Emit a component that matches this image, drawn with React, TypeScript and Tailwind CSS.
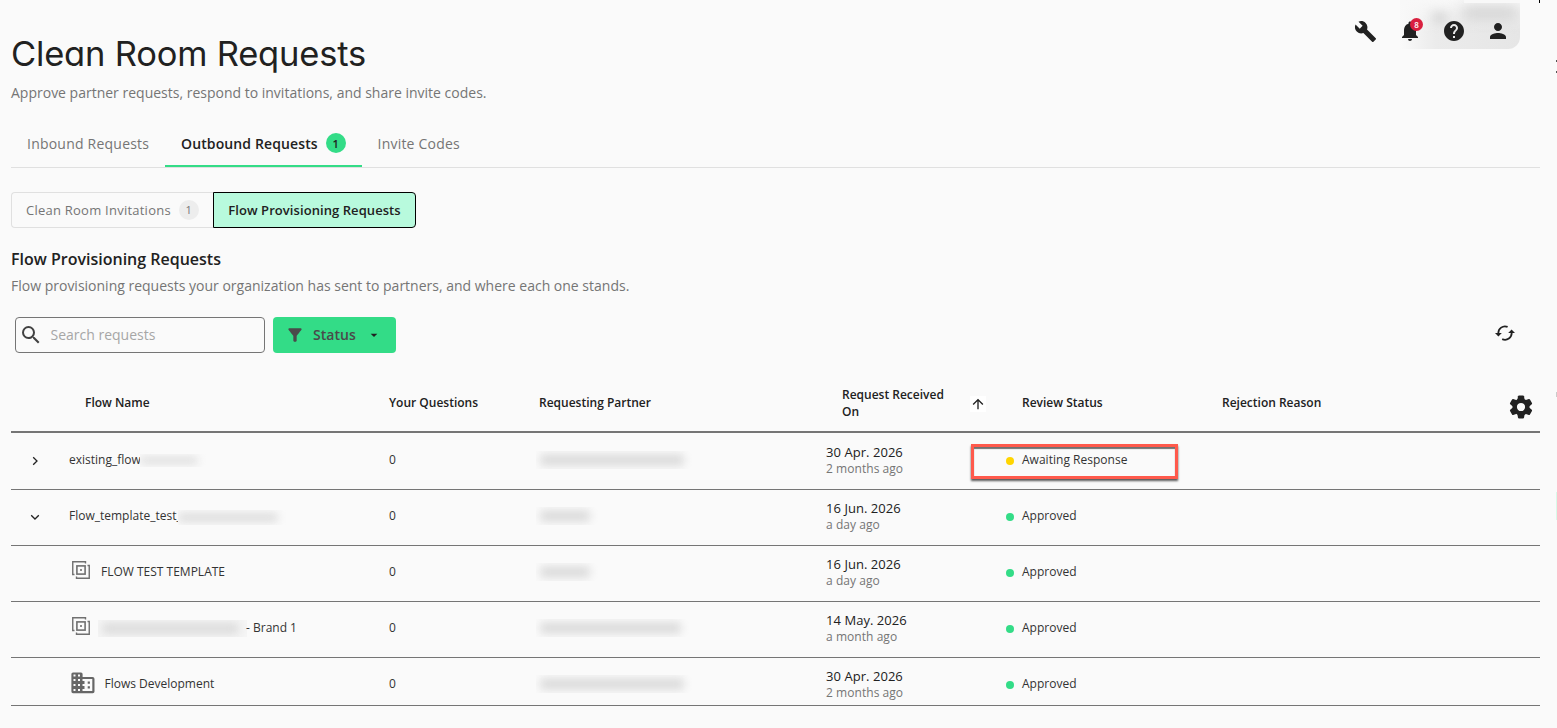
import React from "react";
import {
  MdBuild,
  MdNotifications,
  MdHelp,
  MdPerson,
  MdSearch,
  MdFilterAlt,
  MdArrowDropDown,
  MdArrowUpward,
} from "react-icons/md";

const COLS = "grid grid-cols-[58px_320px_150px_287px_196px_200px_1fr]";

function SyncIcon() {
  return (
    <svg width="20" height="16" viewBox="0 0 20 16" fill="none">
      <path d="M3.4 8.6A6.6 6.6 0 0 1 12.6 1.9" stroke="#212121" strokeWidth="1.8" />
      <path d="M16.6 7.4A6.6 6.6 0 0 1 7.2 14.1" stroke="#212121" strokeWidth="1.8" />
      <path d="M0 8h6.8L3.4 11.4z" fill="#212121" />
      <path d="M13.2 8H20L16.6 4.6z" fill="#212121" />
    </svg>
  );
}

function GearIcon() {
  return (
    <svg width="24" height="24" viewBox="-12 -12 24 24" fill="#212121">
      <circle r="6.3" fill="none" stroke="#212121" strokeWidth="4.4" />
      {[0, 60, 120, 180, 240, 300].map((angle) => (
        <path
          key={angle}
          transform={`rotate(${angle})`}
          d="M-3.700 -7L-3 -10.700Q-2.800 -11.500 -2 -11.500H2Q2.800 -11.500 3 -10.700L3.700 -7z"
        />
      ))}
    </svg>
  );
}

function TemplateIcon() {
  return (
    <svg width="18" height="18" viewBox="0 0 18 18" fill="none" stroke="#707070">
      <path d="M13.5 2.5V.75H.75V13.5H2.5" strokeWidth="1.4" />
      <path d="M4.5 15.5v1.75h12.75V4.5H15.5" strokeWidth="1.4" />
      <rect x="4.9" y="4.9" width="8.2" height="8.2" strokeWidth="1.6" />
      <rect x="8" y="8" width="2" height="2" fill="#8a8a8a" stroke="none" />
    </svg>
  );
}

function BuildingIcon() {
  return (
    <svg width="24" height="22" viewBox="0 0 24 22">
      <path
        fill="#666"
        fillRule="evenodd"
        d="M2 .5h8a1.6 1.6 0 0 1 1.6 1.6V5H21.5a2 2 0 0 1 2 2v12.5a1.7 1.7 0 0 1-1.7 1.7H2A1.6 1.6 0 0 1 .4 19.6V2.1A1.6 1.6 0 0 1 2 .5zM2.5 2.5v2h2v-2zM7 2.5v2h2v-2zM2.5 7v2h2V7zM7 7v2h2V7zM2.5 12v2h2v-2zM7 12v2h2v-2zM2.5 17v2h2v-2zM7 17v2h2v-2zM11.5 7v2h2v3h-2v2h2v3h-2v2h9.8V7z"
      />
      <path fill="#666" d="M16.7 9.5h2.2v2.200h-2.200zM16.7 14.2h2.2v2.2h-2.2z" />
    </svg>
  );
}

function Chevron({ open }: { open: boolean }) {
  return (
    <svg width="10" height="10" viewBox="0 0 10 10" fill="none" stroke="#212121" strokeWidth="1.3">
      {open ? <path d="M1.2 3.2L5 7l3.8-3.8" /> : <path d="M3.2 1.2L7 5 3.2 8.8" />}
    </svg>
  );
}

function Redacted({ className, inset = "pl-1" }: { className: string; inset?: string }) {
  return (
    <span className={`block overflow-hidden ${className}`}>
      <span className={`block h-full py-[3px] pr-2 ${inset}`}>
        <span className="block h-full rounded bg-[#dcdcdc] blur-[4px]" />
      </span>
    </span>
  );
}

type Row = {
  lead: React.ReactNode;
  name: React.ReactNode;
  partner: string;
  date: string;
  ago: string;
  status: string;
  height: string;
};

const rows: Row[] = [
  {
    lead: <Chevron open={false} />,
    name: (
      <>
        <span>existing_flow</span>
        <Redacted inset="pl-0" className="relative -ml-px mt-px h-[13px] w-[66px] bg-[#fafafa]" />
      </>
    ),
    partner: "w-[156px]",
    date: "30 Apr. 2026",
    ago: "2 months ago",
    status: "Awaiting Response",
    height: "h-[57px] pt-px",
  },
  {
    lead: <Chevron open />,
    name: (
      <>
        <span>Flow_template_test_</span>
        <Redacted inset="pl-0" className="relative -ml-[4px] mt-0.5 h-[15px] w-[108px] bg-[#fafafa]" />
      </>
    ),
    partner: "w-[62px]",
    date: "16 Jun. 2026",
    ago: "a day ago",
    status: "Approved",
    height: "h-[56px]",
  },
  {
    lead: null,
    name: (
      <>
        <span className="ml-[3px] mr-[11px] pb-[5px]">
          <TemplateIcon />
        </span>
        <span>FLOW TEST TEMPLATE</span>
      </>
    ),
    partner: "w-[62px]",
    date: "16 Jun. 2026",
    ago: "a day ago",
    status: "Approved",
    height: "h-[56px]",
  },
  {
    lead: null,
    name: (
      <>
        <span className="ml-[3px] mr-2 pb-[5px]">
          <TemplateIcon />
        </span>
        <Redacted className="h-[17px] w-[149px] bg-[#f5f5f5]" />
        <span className="-ml-px">- Brand 1</span>
      </>
    ),
    partner: "w-[153px]",
    date: "14 May. 2026",
    ago: "a month ago",
    status: "Approved",
    height: "h-[56px]",
  },
  {
    lead: null,
    name: (
      <>
        <span className="ml-[2px] mr-[10px] pb-0.5">
          <BuildingIcon />
        </span>
        <span className="-ml-[0.5px]">Flows Development</span>
      </>
    ),
    partner: "w-[156px]",
    date: "30 Apr. 2026",
    ago: "2 months ago",
    status: "Approved",
    height: "h-[48px]",
  },
];

function TableRow({ row }: { row: Row }) {
  const waiting = row.status === "Awaiting Response";
  return (
    <div className={`${COLS} ${row.height} items-start border-b border-[#757575] text-xs text-[#333]`}>
      <div className="flex h-[54px] items-center pl-[19px]">{row.lead}</div>
      <div className="flex h-[52px] items-center whitespace-nowrap [&_svg]:block">{row.name}</div>
      <div className="flex h-[52px] items-center">0</div>
      <div className="flex h-[52px] items-center">
        <Redacted className={`-ml-[3px] h-[18px] ${row.partner}`} />
      </div>
      <div className="pt-[9px]">
        <div className="text-[13px] leading-[18px] tracking-[0.05px] text-[#212121]">{row.date}</div>
        <div className="leading-[15px] tracking-[0.05px] text-[#757575]">{row.ago}</div>
      </div>
      <div className="relative -ml-4 flex h-[52px] items-center gap-2">
        <span className={`mt-px size-2 rounded-full ${waiting ? "bg-[#ffd500]" : "bg-[#33dc87]"}`} />
        <span className="whitespace-nowrap tracking-[0.02px]">{row.status}</span>
        {waiting && (
          <span className="absolute -left-[35px] top-[10px] h-[35px] w-[207px] border-[3px] border-[#ff5a4c] shadow-[0_2px_2px_rgba(0,0,0,0.65),inset_0_2px_1px_rgba(0,0,0,0.55)]" />
        )}
      </div>
      <div />
    </div>
  );
}

export default function App() {
  return (
    <div className="relative h-[728px] w-[1557px] overflow-hidden bg-[#fafafa] pl-[11px] pr-[17px] font-['Open_Sans',sans-serif] text-[#212121]">
      <header className="flex h-[126px] justify-between">
        <div className="pt-[30px]">
          <h1 className="font-['Inter',sans-serif] text-[34.5px] leading-[48px] tracking-[-0.2px] [font-feature-settings:'cv11']">
            Clean Room Requests
          </h1>
          <p className="mt-[5px] text-sm leading-5 text-[#757575]">
            Approve partner requests, respond to invitations, and share invite codes.
          </p>
        </div>
        <div className="relative h-[49px]">
          <div className="absolute -right-[-20px] top-0 h-[49px] w-[120px] overflow-hidden rounded-br-xl bg-linear-to-r from-[#fafafa] via-[#ebebeb] via-30% to-[#e6e6e6]">
            <div className="absolute left-0 top-0 h-8 w-full bg-linear-to-b from-[#f8f8f8] to-transparent" />
            <div className="absolute left-[62px] top-[7px] h-3 w-14 bg-[#cfcfcf] blur-[7px]" />
            <div className="absolute left-8 top-3 h-3 w-4 bg-[#dadada] blur-[5px]" />
            <div className="absolute right-0 top-0 h-[3px] w-14 bg-[#f8f8f8]" />
          </div>
          <div className="relative flex h-[62px] items-center gap-5 pr-[30px]">
            <MdBuild size={23} className="mr-px" />
            <span className="relative">
              <MdNotifications size={24} />
              <span className="absolute left-[12px] -top-px flex size-[13px] items-center justify-center rounded-full bg-[#d9203f] text-[8px] font-semibold leading-none text-white">
                8
              </span>
            </span>
            <MdHelp size={24} />
            <MdPerson size={24} />
          </div>
        </div>
      </header>

      <nav className="flex h-[42px] border-b border-[#e0e0e0] text-sm font-medium tracking-[0.22px] text-[#757575]">
        <div className="flex h-9 w-[154px] items-center pl-4">Inbound Requests</div>
        <div className="flex h-[41px] w-[197px] gap-2 border-b-2 border-[#33dc87] pl-4 font-semibold tracking-[0.12px] text-[#212121]">
          <span className="flex h-9 items-center">Outbound Requests</span>
          <span className="mt-[7px] flex size-5 items-center justify-center rounded-full bg-[#33dc87] pt-px text-[11px] font-semibold">1</span>
        </div>
        <div className="flex h-9 items-center pl-[15.5px]">Invite Codes</div>
      </nav>

      <div className="mt-6 flex h-9 text-[13px]">
        <button className="flex w-[202px] items-center gap-2 rounded-l border border-r-0 border-[#e0e0e0] pl-[14px] pt-px font-medium tracking-[0.24px] text-[#757575]">
          <span>Clean Room Invitations</span>
          <span className="-mt-px flex size-5 items-center justify-center rounded-full bg-[#ededed] pt-px text-[11px]">1</span>
        </button>
        <button className="flex w-[203px] items-center justify-center rounded-r border border-black bg-[#b8fadd] pt-0.5 font-semibold tracking-[0.07px]">
          Flow Provisioning Requests
        </button>
      </div>

      <h2 className="mt-[19px] text-base font-semibold leading-6">Flow Provisioning Requests</h2>
      <p className="mt-[5px] text-sm leading-5 text-[#757575]">
        Flow provisioning requests your organization has sent to partners, and where each one stands.
      </p>

      <div className="mt-[21px] flex h-9 items-center pl-1">
        <div className="flex h-9 w-[250px] items-center gap-2 rounded border border-[#757575] pl-[2.5px] text-sm text-[#a6a6a6]">
          <MdSearch size={24} className="text-[#424242]" />
          <span>Search requests</span>
        </div>
        <button className="ml-2 flex h-9 w-[123px] items-center rounded bg-[#33dc87] pl-[12px] text-sm font-semibold tracking-[0.05px] text-[#4a4a4a]">
          <MdFilterAlt size={20} />
          <span className="ml-2">Status</span>
          <MdArrowDropDown size={16} className="ml-[10px] text-[#212121]" />
        </button>
        <div className="ml-auto mr-[25px] -mt-[5px]">
          <SyncIcon />
        </div>
      </div>

      <div className={`${COLS} mt-5 h-[60px] items-center border-b-2 border-[#757575] pt-0.5 text-xs font-semibold`}>
        <div />
        <div className="pl-4">Flow Name</div>
        <div>Your Questions</div>
        <div>Requesting Partner</div>
        <div className="flex items-center pl-4">
          <div className="w-[128px] leading-[17px]">
            Request Received
            <br />
            On
          </div>
          <div className="mt-px flex size-4 items-center justify-center bg-white">
            <MdArrowUpward size={16} />
          </div>
        </div>
        <div>Review Status</div>
        <div className="flex h-4 items-center justify-between pr-[7px]">
          <span>Rejection Reason</span>
          <span className="mt-2">
            <GearIcon />
          </span>
        </div>
      </div>

      {rows.map((row, i) => (
        <TableRow key={i} row={row} />
      ))}

      <div className="absolute left-[1539px] top-0 h-[3px] w-px bg-black" />
      <div className="absolute left-[1556px] top-[60px] h-[2px] w-px bg-[#555]" />
      <div className="absolute left-[1556px] top-[71px] h-[2px] w-px bg-[#555]" />
      <div className="absolute left-[1556px] top-[392px] h-[5px] w-px bg-[#ccc]" />
      <div className="absolute left-[1556px] top-[492px] h-7 w-px bg-[#d9fae9]" />
    </div>
  );
}
